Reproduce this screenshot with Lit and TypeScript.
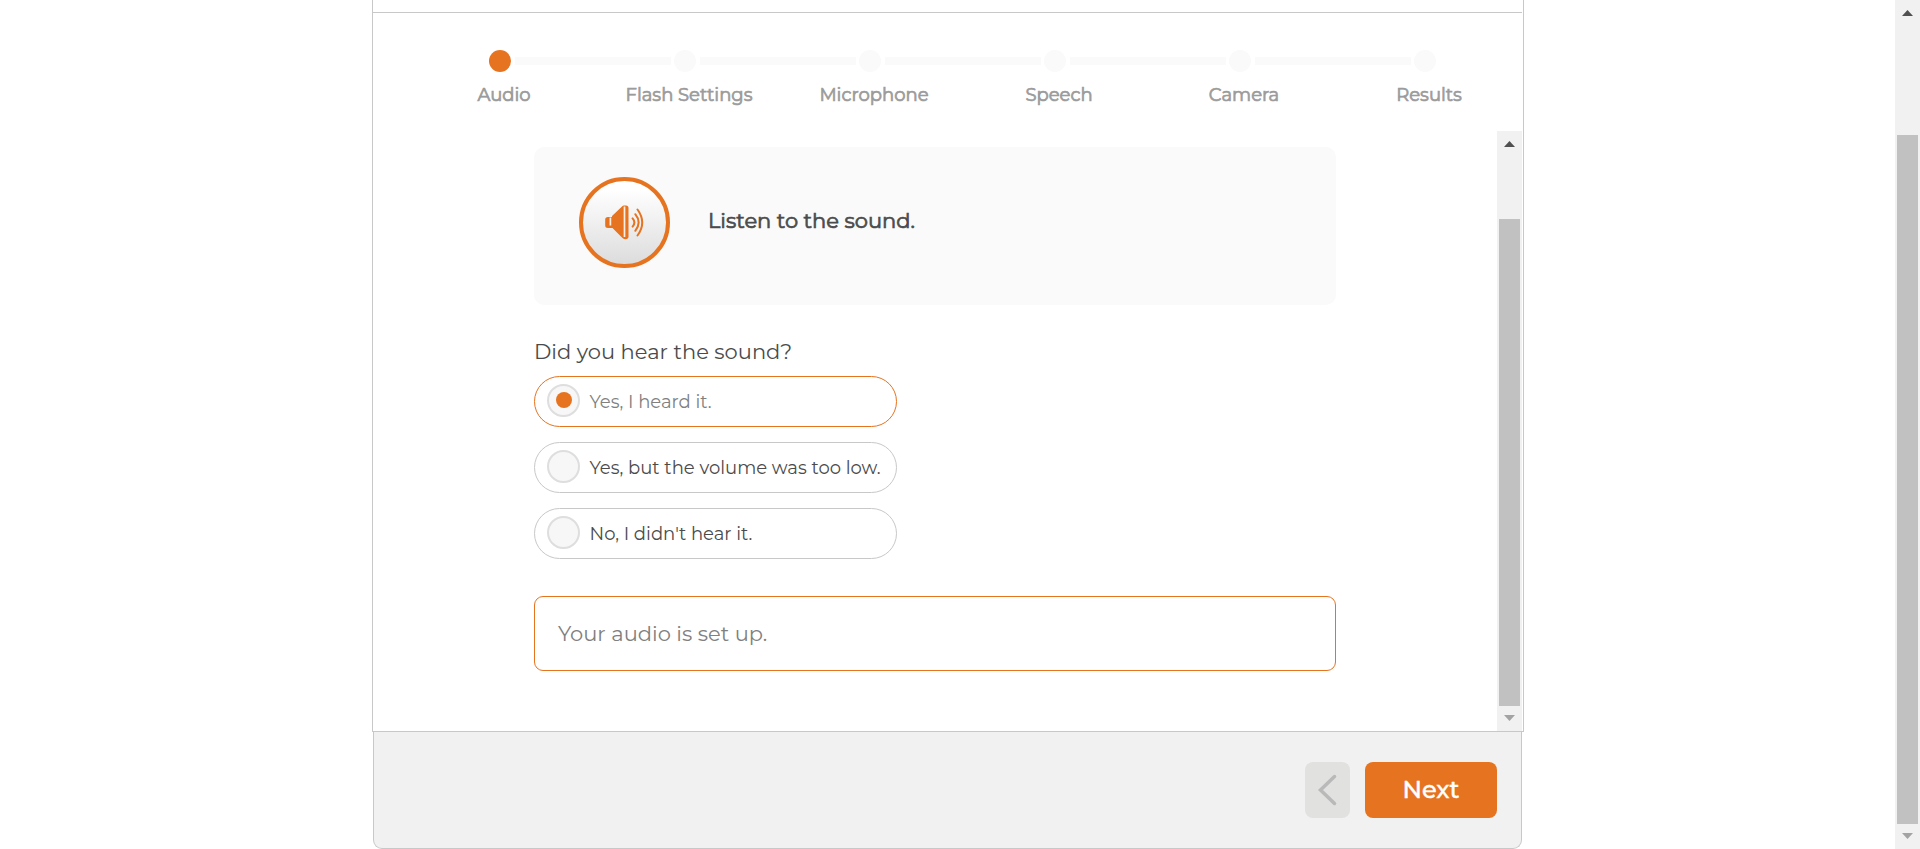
import { LitElement, html, css } from "lit";
import { customElement, property, state } from "lit/decorators.js";
import { classMap } from "lit/directives/class-map.js";

@customElement("scroll-bar")
class ScrollBar extends LitElement {
  @property({ type: Number }) start = 0;
  @property({ type: Number }) size = 0;

  static styles = css`
    :host {
      display: flex;
      flex-direction: column;
      align-items: center;
      width: 25px;
      box-sizing: border-box;
      background: #f1f1f1;
    }
    .up, .down { display: block; width: 11px; height: 6px; flex: none; }
    .up { margin-top: 10px; fill: #505050; }
    .down { margin-top: 9px; fill: #a3a3a3; }
    .thumb { width: 21px; background: #c1c1c1; flex: none; }
  `;

  render() {
    return html`
      <svg class="up" viewBox="0 0 11 6"><path d="M0 6L5.5 0L11 6z" /></svg>
      <div class="thumb" style="margin-top:${this.start - 16}px;height:${this.size}px"></div>
      <svg class="down" viewBox="0 0 11 6"><path d="M0 0L5.500 6L11 0z" /></svg>
    `;
  }
}

@customElement("step-tracker")
class StepTracker extends LitElement {
  @property({ type: Number }) current = 0;
  steps = ["Audio", "Flash Settings", "Microphone", "Speech", "Camera", "Results"];

  static styles = css`
    :host { display: block; padding: 37px 0 0 38px; }
    .steps { display: flex; }
    .step { width: 185px; flex: none; }
    .track { display: grid; grid-template-columns: 78px 22px 85px; height: 22px; align-items: center; }
    .line { height: 8px; background: #fafafa; }
    .before { margin-right: 3px; }
    .after { margin-left: 4px; }
    .hidden { visibility: hidden; }
    .dot { width: 22px; height: 22px; border-radius: 50%; background: #fafafa; }
    .dot.active { background: #e67320; }
    .label {
      margin: 12px 0 0 1px;
      line-height: 22px;
      font-size: 18px;
      text-align: center;
      color: #9b9b9b;
      -webkit-text-stroke: 0.7px #9b9b9b;
      white-space: nowrap;
    }
  `;

  render() {
    const last = this.steps.length - 1;
    return html`<div class="steps">
      ${this.steps.map(
        (name, i) => html`<div class="step">
          <div class="track">
            <div class=${classMap({ line: true, before: true, hidden: i === 0 })}></div>
            <div class=${classMap({ dot: true, active: i === this.current })}></div>
            <div class=${classMap({ line: true, after: true, hidden: i === last })}></div>
          </div>
          <div class="label">${name}</div>
        </div>`
      )}
    </div>`;
  }
}

@customElement("app-root")
class AppRoot extends LitElement {
  @state() selected = 0;
  answers = ["Yes, I heard it.", "Yes, but the volume was too low.", "No, I didn't hear it."];

  static styles = css`
    :host {
      display: flex;
      justify-content: space-between;
      height: 849px;
      overflow: hidden;
      background: #fff;
      color: #4b4b4b;
      font-family: Montserrat, Inter, "Open Sans", sans-serif;
    }
    * { box-sizing: border-box; }
    .panel { width: 1152px; margin-left: 372px; }
    .body {
      height: 732px;
      border: 1px solid #c8c8c8;
      border-top: 0;
      display: flex;
      flex-direction: column;
    }
    .header { height: 13px; flex: none; border-bottom: 1px solid #c8c8c8; margin-right: 1px; }
    step-tracker { height: 118px; flex: none; }
    .scroller { display: flex; justify-content: space-between; flex: 1; padding-right: 1px; }
    .content { width: 802px; margin-left: 161px; padding-top: 16px; }
    .card {
      height: 158px;
      border-radius: 10px;
      background: #fafafa;
      display: flex;
      padding: 30px 0 0 45px;
    }
    .play {
      width: 91px;
      height: 91px;
      padding: 0;
      border: 4px solid #e67320;
      border-radius: 50%;
      background: linear-gradient(#fff 10%, #dcdcdc 100%);
      display: flex;
      align-items: center;
      justify-content: center;
    }
    .play svg { display: block; flex: none; margin-right: 1px; }
    .listen {
      margin: 31px 0 0 38px;
      font-size: 21px;
      line-height: 26px;
      -webkit-text-stroke: 0.7px #4b4b4b;
    }
    .question { margin-top: 34px; font-size: 21px; line-height: 26px; }
    .answers { display: flex; flex-direction: column; gap: 15px; margin-top: 11px; width: 363px; }
    .answer {
      height: 51px;
      border: 1px solid #c8c8c8;
      border-radius: 26px;
      display: flex;
      align-items: center;
      padding-left: 12px;
      gap: 9.500px;
      font-size: 18px;
      line-height: 22px;
      white-space: nowrap;
    }
    .answer.on { border-color: #e67320; color: #808080; }
    .radio {
      width: 33px;
      height: 33px;
      margin-bottom: 3px;
      border: 2px solid #dedede;
      border-radius: 50%;
      background: #f7f7f7;
      display: grid;
      place-items: center;
    }
    .pip { width: 16px; height: 16px; border-radius: 50%; background: #e67320; }
    .message {
      height: 75px;
      margin-top: 37px;
      border: 1px solid #e67320;
      border-radius: 9px;
      padding: 24px 23px 0;
      font-size: 21px;
      line-height: 26px;
      color: #808080;
    }
    .footer {
      height: 117px;
      margin: 0 2px 0 1px;
      border: 1px solid #c8c8c8;
      border-top: 0;
      border-radius: 0 0 9px 9px;
      background: #f1f1f1;
      display: flex;
      justify-content: flex-end;
      gap: 15px;
      padding: 30px 24px 0 0;
    }
    .btn {
      height: 56px;
      padding: 0;
      border: 0;
      border-radius: 8px;
      font: 500 24px/30px Montserrat, Inter, "Open Sans", sans-serif;
      display: flex;
      align-items: center;
      justify-content: center;
    }
    .back { width: 45px; background: #e1e1df; }
    .back svg { margin-right: 1px; }
    .next { width: 132px; background: #e67320; color: #fff; -webkit-text-stroke: 0.4px #fff; }
  `;

  render() {
    return html`
      <div class="panel">
        <div class="body">
          <div class="header"></div>
          <step-tracker current="0"></step-tracker>
          <div class="scroller">
            <div class="content">
              <div class="card">
                <button class="play" aria-label="Play sound">
                  <svg width="40" height="35" viewBox="0 0 40 35" fill="none" stroke="#e67320">
                    <path fill="#e67320" stroke="none" d="M8 12H4Q1.200 12 1.200 14.500V20.500Q1.200 23 4 23H8.500L18.500 33Q20 34.300 21.500 34.300Q24.500 34.300 24.500 31.500V3Q24.500 .4 22 .4H20Q18.800 .6 18 1.400L8 11Z" />
                    <path stroke="#fff0e2" stroke-width="1.700" d="M6.400 12.500V20.500M20.500 1.400V32" />
                    <path stroke-width="2" stroke-linecap="round" d="M28.600 13.400Q32.200 17.500 28.600 21.600M31.300 9.200Q38 17.500 31.300 25.800M33.500 4.500Q43 17.500 33.500 30.500" />
                  </svg>
                </button>
                <div class="listen">Listen to the sound.</div>
              </div>
              <div class="question">Did you hear the sound?</div>
              <div class="answers">
                ${this.answers.map(
                  (text, i) => html`<div
                    class=${classMap({ answer: true, on: i === this.selected })}
                    @click=${() => (this.selected = i)}
                  >
                    <span class="radio">${i === this.selected ? html`<span class="pip"></span>` : ""}</span>
                    <span>${text}</span>
                  </div>`
                )}
              </div>
              <div class="message">Your audio is set up.</div>
            </div>
            <scroll-bar start="88" size="487"></scroll-bar>
          </div>
        </div>
        <div class="footer">
          <button class="btn back" aria-label="Back">
            <svg width="20" height="32" viewBox="0 0 20 32" fill="none" stroke="#b9b9b9" stroke-width="3.500" stroke-linecap="round">
              <path d="M17.500 2.500L3.500 16L17.500 29.500" />
            </svg>
          </button>
          <button class="btn next">Next</button>
        </div>
      </div>
      <scroll-bar start="135" size="689"></scroll-bar>
    `;
  }
}
